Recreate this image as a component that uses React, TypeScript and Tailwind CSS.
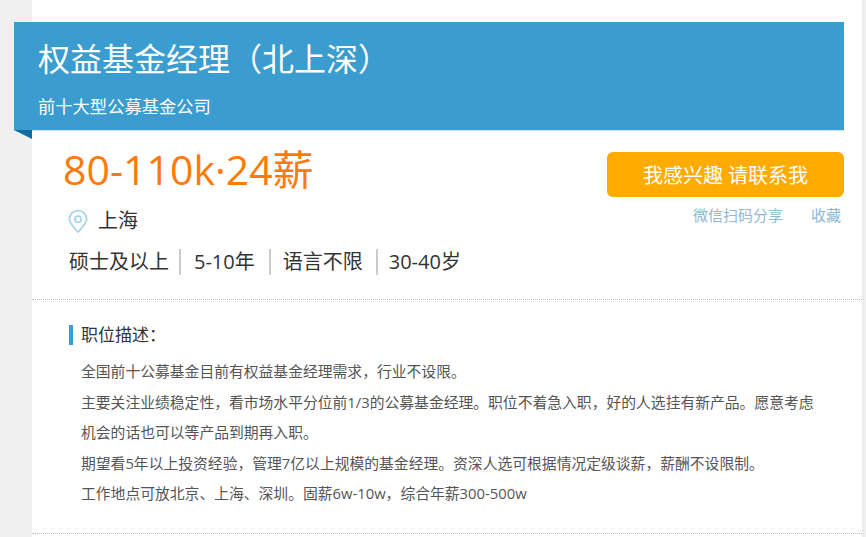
const cjk = "font-['Open_Sans','Noto_Sans_CJK_SC',sans-serif]";

function PinIcon() {
  return (
    <svg width="20" height="25" viewBox="0 0 22 26" fill="none" stroke="#a9d3ea" strokeWidth="2">
      <path d="M11 24.5 C6.5 19.5 1.5 15 1.5 10.5 A9.5 9.5 0 0 1 20.5 10.5 C20.5 15 15.5 19.5 11 24.5 Z" strokeLinejoin="round" />
      <circle cx="11" cy="10.5" r="3.4" />
    </svg>
  );
}

const lines = [
  "全国前十公募基金目前有权益基金经理需求，行业不设限。",
  "主要关注业绩稳定性，看市场水平分位前1/3的公募基金经理。职位不着急入职，好的人选挂有新产品。愿意考虑机会的话也可以等产品到期再入职。",
  "期望看5年以上投资经验，管理7亿以上规模的基金经理。资深人选可根据情况定级谈薪，薪酬不设限制。",
  "工作地点可放北京、上海、深圳。固薪6w-10w，综合年薪300-500w",
];

export default function App() {
  return (
    <div className={`h-[537px] overflow-hidden bg-[#f0f0f0] pl-8 ${cjk}`}>
      <div className="w-[832px] h-full bg-white border-r-2 border-[#ececec] pt-[22px]">
        {/* Title banner */}
        <div className="relative -ml-[18px] w-[830px] h-[109px] bg-[#3b9ccf] text-white pl-6 pt-[14px] border-b border-[#cfe6f3]">
          <h1 className="text-[32px] leading-[46px] font-normal">权益基金经理（北上深）</h1>
          <p className="mt-[13px] text-[17.3px] leading-6">前十大型公募基金公司</p>
          <div className="absolute left-0 top-full w-0 h-0 border-t-[9px] border-t-[#0f6ca3] border-l-[18px] border-l-transparent" />
        </div>

        {/* Summary */}
        <div className="flex justify-between h-[169px] border-b border-dotted border-[#bbb]">
          <div className="pl-8">
            <div className="-ml-px text-[41px] leading-[56px] text-[#ff7a0d] mt-[10px]">80-110k·24薪</div>
            <div className="flex items-center gap-[10px] ml-[4px] mt-[10px] h-[28px] text-[20px] text-[#333]">
              <PinIcon />
              <span>上海</span>
            </div>
            <div className="flex items-center ml-[5px] mt-[14px] text-[20px] leading-[26px] text-[#333]">
              <span className="pr-[10px] mr-[13px] border-r-2 border-[#ccc]">硕士及以上</span>
              <span className="pr-[14px] mr-3 border-r-2 border-[#ccc]">5-10年</span>
              <span className="pr-[13px] mr-[11px] border-r-2 border-[#ccc]">语言不限</span>
              <span>30-40岁</span>
            </div>
          </div>
          <div className="w-[237px] mt-[21px] mr-[18px]">
            <button className="w-full h-[45px] pt-[2px] rounded-md bg-[#ffab00] text-white text-[20px]">我感兴趣 请联系我</button>
            <div className="flex justify-end gap-7 mt-[8px] pr-[3px] text-[15px] leading-5 text-[#8fb8d3]">
              <span>微信扫码分享</span>
              <span>收藏</span>
            </div>
          </div>
        </div>

        {/* Description */}
        <div className="h-[234px] border-b border-dotted border-[#bbb] pl-[37px] pr-[40px] pt-[25px]">
          <h2 className="border-l-[4px] border-[#3b9ccf] pl-2 text-[17px] leading-[20px] font-normal text-[#333]">职位描述：</h2>
          <div className="mt-[11px] pl-3 text-[14.8px] leading-[30.5px] text-[#555]">
            {lines.map((l) => (
              <p key={l}>{l}</p>
            ))}
          </div>
        </div>
      </div>
    </div>
  );
}
